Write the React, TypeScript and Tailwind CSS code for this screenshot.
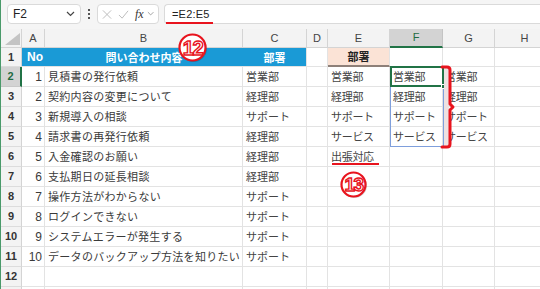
import React from "react";

const rows: [number, string, string][] = [
  [1, "見積書の発行依頼", "営業部"],
  [2, "契約内容の変更について", "経理部"],
  [3, "新規導入の相談", "サポート"],
  [4, "請求書の再発行依頼", "経理部"],
  [5, "入金確認のお願い", "経理部"],
  [6, "支払期日の延長相談", "経理部"],
  [7, "操作方法がわからない", "サポート"],
  [8, "ログインできない", "サポート"],
  [9, "システムエラーが発生する", "サポート"],
  [10, "データのバックアップ方法を知りたい", "サポート"],
];

const eCol = ["営業部", "経理部", "サポート", "サービス", "出張対応"];
const fCol = ["営業部", "経理部", "サポート", "サービス"];

const cell = "border-r border-b border-[#e3e3e3] flex items-center overflow-hidden whitespace-nowrap";

function RowHead({ n, sel }: { n: number | null; sel?: boolean }) {
  return (
    <div
      className={
        sel
          ? "bg-[#d3d3d3] border-r-2 border-r-[#217346] border-b border-b-[#c8c8c8] flex items-center justify-center text-[11px] text-[#1f6b41] font-bold"
          : "bg-[#f3f3f3] border-r border-r-[#d4d4d4] border-b border-b-[#dcdcdc] flex items-center justify-center text-[11px] text-[#333] font-bold"
      }
    >
      {n ?? ""}
    </div>
  );
}

function Circled({ label, size, className }: { label: string; size: number; className: string }) {
  const c = size / 2;
  return (
    <svg className={className} width={size + 4} height={size + 4} viewBox={`-2 -2 ${size + 4} ${size + 4}`}>
      <circle cx={c + 1} cy={c + 1} r={c - 1} fill="#000" opacity="0.18" />
      <circle cx={c} cy={c} r={c - 1.5} fill="white" stroke="#e8141e" strokeWidth="2.2" />
      <text
        x={c}
        y={c + size * 0.25}
        textAnchor="middle"
        fontSize={size * 0.7}
        fontWeight="bold"
        fontFamily="Liberation Sans, sans-serif"
        fill="white"
        stroke="#e8141e"
        strokeWidth="1.4"
        letterSpacing="-1.5"
      >
        {label}
      </text>
    </svg>
  );
}

export default function App() {
  const colHeads = ["A", "B", "C", "D", "E", "F", "G", "H"];
  const jp = { fontFamily: '"Noto Sans CJK JP", sans-serif' };
  return (
    <div
      className="relative w-[540px] h-[289px] overflow-hidden bg-white border-l border-l-[#4a9a6a]"
      style={{ fontFamily: '"Liberation Sans", "Noto Sans CJK JP", sans-serif' }}
    >
      {/* toolbar */}
      <div className="h-[29px] bg-[#f5f5f5] flex items-start pt-[4px]">
        <div className="ml-[6px] w-[74px] h-[20px] rounded-[4px] bg-white border border-[#dadada] flex items-center justify-between px-[5px]">
          <span className="text-[12px] text-[#222]">F2</span>
          <svg width="9" height="6" viewBox="0 0 9 6">
            <path d="M1 1 L4.5 4.5 L8 1" fill="none" stroke="#444" strokeWidth="1.2" />
          </svg>
        </div>
        <div className="w-[16px] h-[20px] flex flex-col items-center justify-center gap-[2px]">
          <div className="w-[2px] h-[2px] bg-[#555]" />
          <div className="w-[2px] h-[2px] bg-[#555]" />
          <div className="w-[2px] h-[2px] bg-[#555]" />
        </div>
        <div className="w-[62px] h-[20px] rounded-[4px] bg-white border border-[#dadada] flex items-center px-[4px] gap-[6px]">
          <svg width="11" height="11" viewBox="0 0 11 11">
            <path d="M1 1 L10 10 M10 1 L1 10" stroke="#b8b8b8" strokeWidth="1" />
          </svg>
          <svg width="12" height="11" viewBox="0 0 12 11">
            <path d="M1 6 L4.5 9.5 L11 1.5" fill="none" stroke="#b8b8b8" strokeWidth="1" />
          </svg>
          <span
            className="text-[12px] italic text-[#333] leading-none"
            style={{ fontFamily: '"Liberation Serif", serif' }}
          >
            fx
          </span>
          <svg width="8" height="6" viewBox="0 0 8 6" className="-ml-[3px]">
            <path d="M1 1 L4 4 L7 1" fill="none" stroke="#999" strokeWidth="1" />
          </svg>
        </div>
        <div className="ml-[5px] flex-1 h-[20px] rounded-l-[4px] bg-white border border-r-0 border-[#dadada] flex items-center pl-[7px]">
          <span className="text-[11px] text-[#222] tracking-[0.2px]">=E2:E5</span>
        </div>
      </div>

      {/* grid */}
      <div className="grid grid-cols-[21px_23px_198px_64px_21px_62px_53px_52px_60px] grid-rows-[19px_19px_repeat(12,20px)] text-[11px]">
        {/* column header row */}
        <div className="bg-[#f3f3f3] border-r border-b border-[#d4d4d4] relative">
          <svg width="15" height="12" viewBox="0 0 15 12" className="absolute right-[1px] bottom-[2px]">
            <path d="M15 0 L15 12 L0 12 Z" fill="#c4c4c4" />
          </svg>
        </div>
        {colHeads.map((c) => (
          <div
            key={c}
            className={
              c === "F"
                ? "bg-[#d3d3d3] border-r border-r-[#c4c4c4] border-b-2 border-b-[#217346] flex items-center justify-center text-[11px] text-[#1f6b41]"
                : "bg-[#f3f3f3] border-r border-r-[#d4d4d4] border-b border-b-[#d4d4d4] flex items-center justify-center text-[11px] text-[#444]"
            }
          >
            {c}
          </div>
        ))}

        {/* row 1 */}
        <RowHead n={1} />
        <div className="bg-[#1a9ad6] border-b border-b-[#e3e3e3] flex items-center pl-[5px] text-white font-bold text-[12px]">No</div>
        <div className="bg-[#1a9ad6] border-b border-b-[#e3e3e3] flex items-center justify-center text-white font-bold text-[11px]" style={jp}>
          問い合わせ内容
        </div>
        <div className="bg-[#1a9ad6] border-r border-r-[#e3e3e3] border-b border-b-[#e3e3e3] flex items-center justify-center text-white font-bold text-[11px]" style={jp}>
          部署
        </div>
        <div className={cell} />
        <div className="bg-[#fbe3d6] border-r border-r-[#e3e3e3] border-b-2 border-b-[#8e8079] flex items-center justify-center font-bold text-[11px] text-[#222]" style={jp}>
          部署
        </div>
        <div className={cell} />
        <div className={cell} />
        <div className={cell} />

        {/* rows 2..13 */}
        {Array.from({ length: 12 }).map((_, i) => {
          const r = rows[i];
          const n = i + 2;
          const e = eCol[i];
          const f = fCol[i];
          return (
            <React.Fragment key={n}>
              <RowHead n={n <= 12 ? n : null} sel={n === 2} />
              <div className={cell + " justify-end pr-[2px] text-[12px] text-[#3a3a3a]"}>{r ? r[0] : ""}</div>
              <div className={cell + " pl-[3px] text-[#3a3a3a] tracking-[0.3px]"} style={jp}>
                {r ? r[1] : ""}
              </div>
              <div className={cell + " pl-[3px] text-[#444]"} style={jp}>
                {r ? r[2] : ""}
              </div>
              <div className={cell} />
              <div className={cell + " pl-[3px] text-[#444] tracking-[-0.3px]"} style={jp}>
                {e ?? ""}
              </div>
              <div className={cell + " pl-[3px] text-[#444] tracking-[-0.3px]"} style={jp}>
                {f ?? ""}
              </div>
              <div className={cell + " pl-[2px] text-[#444] tracking-[-0.3px]"} style={jp}>
                {f ?? ""}
              </div>
              <div className={cell} />
            </React.Fragment>
          );
        })}
      </div>

      {/* spill range border F2:F5 */}
      <div className="absolute left-[389px] top-[66px] w-[54px] h-[81px] border border-[#7f9fdc] pointer-events-none" />
      {/* active cell F2 */}
      <div className="absolute left-[389px] top-[66px] w-[54px] h-[21px] border-2 border-[#217346] pointer-events-none" />
      <div className="absolute left-[440px] top-[84px] w-[5px] h-[5px] bg-[#217346] border border-white" />

      {/* light fill behind bracket */}
      <div className="absolute left-[443px] top-[67px] w-[5px] h-[80px] bg-[#eee2e2]" />

      {/* bracket */}
      <svg className="absolute left-0 top-0 pointer-events-none" width="540" height="289">
        <path
          d="M441 67 L446 67 Q449 67 449 70 L449 104 L452 107 L449 110 L449 144 Q449 147 446 147 L441 147"
          fill="none"
          stroke="#e8141e"
          strokeWidth="3"
          strokeLinecap="round"
          strokeLinejoin="round"
        />
      </svg>

      {/* red underlines */}
      <div className="absolute left-[165px] top-[22px] w-[47px] h-[2px] bg-[#e8141e]" />
      <div className="absolute left-[331px] top-[163px] w-[47px] h-[2px] bg-[#e8141e]" />

      {/* circled numbers */}
      <Circled label="12" size={29} className="absolute left-[175px] top-[31px]" />
      <Circled label="13" size={27} className="absolute left-[337px] top-[169px]" />
    </div>
  );
}
